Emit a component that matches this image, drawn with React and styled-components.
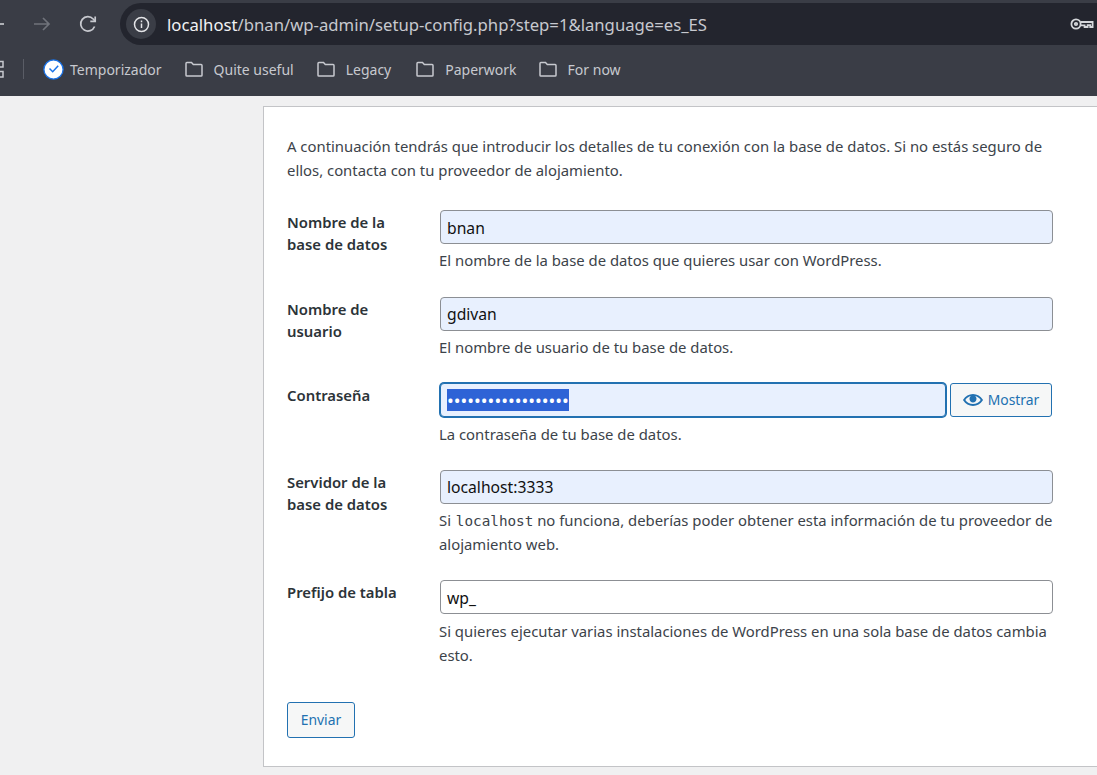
import React from "react";
import styled, { createGlobalStyle } from "styled-components";

const GlobalStyle = createGlobalStyle`
  html, body {
    margin: 0;
    height: 100%;
    overflow: hidden;
    background: #f0f0f1;
  }
`;

const Page = styled.div`
  width: 1097px;
  height: 775px;
  overflow: hidden;
  font-family: "Noto Sans", "Open Sans", sans-serif;
`;

// browser chrome
const Chrome = styled.div`
  height: 96px;
  background: #3a3d46;
  display: flex;
  flex-direction: column;
`;

const Toolbar = styled.div`
  height: 45px;
  padding-top: 3px;
  box-sizing: border-box;
  display: flex;
  align-items: center;
  margin-left: -16px;
`;

const NavIcon = styled.svg`
  width: 24px;
  height: 24px;
  margin-right: 22px;
  flex: none;
  fill: none;
  stroke: ${(p) => p.$color};
  stroke-width: 1.7;
`;

const AddressBar = styled.div`
  flex: 1;
  height: 42px;
  margin-left: -2px;
  margin-right: -30px;
  border-radius: 21px 0 0 21px;
  background: #23252e;
  display: flex;
  align-items: center;
  padding-left: 6px;
  padding-right: 33px;
`;

const InfoBadge = styled.div`
  width: 30px;
  height: 30px;
  border-radius: 50%;
  background: #3a3d46;
  display: flex;
  align-items: center;
  justify-content: center;
  margin-right: 11px;
`;

const Url = styled.div`
  flex: 1;
  color: #c7c9cf;
  font-size: 16.7px;
  white-space: nowrap;
  & b {
    font-weight: 400;
    color: #f1f2f4;
  }
`;

const Bookmarks = styled.div`
  flex: 1;
  display: flex;
  align-items: center;
  padding-bottom: 3px;
  color: #c7c9cf;
  font-size: 14px;
`;

const Divider = styled.div`
  width: 1px;
  height: 20px;
  background: #5a5d66;
  margin: 0 19px 0 19px;
`;

const Bookmark = styled.div`
  display: flex;
  align-items: center;
  gap: ${(p) => p.$gap || 10}px;
  margin-right: ${(p) => p.$after || 22}px;
  white-space: nowrap;
`;

const Clock = styled.svg`
  width: 21px;
  height: 21px;
`;

const FolderIcon = styled.svg`
  width: 20px;
  height: 18px;
  fill: none;
  stroke: #c7c9cf;
  stroke-width: 1.5;
`;

// wordpress card
const Content = styled.div`
  padding: 10px 0 0 263px;
`;

const Card = styled.div`
  width: 900px;
  height: 661px;
  box-sizing: border-box;
  background: #fff;
  border: 1px solid #c3c4c7;
  padding: 27px 23px;
  color: #3c434a;
  font-size: 14.86px;
  line-height: 24px;
`;

const FormColumn = styled.div`
  width: 766px;
`;

const Intro = styled.p`
  margin: 0 0 28px;
`;

const Row = styled.div`
  display: grid;
  grid-template-columns: 152px 1fr;
  margin-bottom: ${(p) => p.$gap}px;
`;

const Label = styled.div`
  font-weight: 600;
  color: #2c3338;
  line-height: 22px;
  padding-top: 1px;
  padding-right: 20px;
`;

const InputLine = styled.div`
  display: flex;
  gap: 4px;
  padding-left: 1px;
  margin-right: ${(p) => (p.$tight ? 1 : 0)}px;
`;

const TextInput = styled.div`
  flex: 1;
  height: 34px;
  box-sizing: border-box;
  padding: 1px 6px 0;
  display: flex;
  align-items: center;
  font-size: 15.7px;
  color: #111;
  background: ${(p) => (p.$plain ? "#fff" : "#e8f0fe")};
  border: 1px solid #8c8f94;
  border-radius: 4px;
`;

const FocusInput = styled(TextInput)`
  padding-top: 0;
  border-color: #2271b1;
  box-shadow: 0 0 0 1px #2271b1;
`;

const Selected = styled.span`
  display: inline-block;
  background: #2e63d6;
  color: #fff;
  font-size: 18px;
  line-height: 22px;
  height: 22px;
`;

const Help = styled.div`
  margin-top: 4.4px;
  & code {
    font-family: "DejaVu Sans Mono", "Liberation Mono", monospace;
    font-size: 14.3px;
    line-height: 1;
    margin-left: 1px;
  }
`;

const Button = styled.div`
  display: inline-flex;
  align-items: center;
  justify-content: center;
  gap: 5px;
  height: ${(p) => p.$h}px;
  width: ${(p) => p.$w}px;
  box-sizing: border-box;
  flex: none;
  background: #f6f7f7;
  color: #2271b1;
  border: 1px solid #2271b1;
  border-radius: 3px;
  font-size: 13.9px;
`;

const Folder = () => (
  <FolderIcon viewBox="0 0 20 18">
    <path d="M2 15.2V3.4c0-.5.4-.9.9-.9h4.6l1.8 2h7.800c.5 0 .9.4.9.9v9.800c0 .5-.4.9-.9.9H2.900c-.5 0-.9-.4-.9-.9z" />
  </FolderIcon>
);

const fields = [
  { label: "Nombre de la base de datos", value: "bnan", help: "El nombre de la base de datos que quieres usar con WordPress." },
  { label: "Nombre de usuario", value: "gdivan", help: "El nombre de usuario de tu base de datos." },
];

export default function App() {
  return (
    <Page>
      <GlobalStyle />
      <Chrome>
        <Toolbar>
          <NavIcon viewBox="0 0 24 24" $color="#d5d7db">
            <path d="M20 12H5M11 6l-6 6 6 6" />
          </NavIcon>
          <NavIcon viewBox="0 0 24 24" $color="#70737b">
            <path d="M4 12h15M13 6l6 6-6 6" />
          </NavIcon>
          <NavIcon viewBox="0 0 24 24" $color="#c7c9cf">
            <path d="M18.6 14.5A7.200 7.200 0 1 1 17.200 7L19 9" />
            <path d="M19.200 4.500V9.400H14.300" />
          </NavIcon>
          <AddressBar>
            <InfoBadge>
              <svg width="17" height="17" viewBox="0 0 17 17" fill="none" stroke="#e3e4e7" strokeWidth="1.5">
                <circle cx="8.5" cy="8.5" r="7" />
                <path d="M8.500 7.500v4.500M8.500 4.600v1.600" />
              </svg>
            </InfoBadge>
            <Url>
              <b>localhost</b>/bnan/wp-admin/setup-config.php?step=1&amp;language=es_ES
            </Url>
            <svg width="24" height="14" viewBox="0 0 24 14" fill="none" stroke="#d5d7db" strokeWidth="1.8">
              <circle cx="6" cy="7" r="4.6" />
              <circle cx="6" cy="7" r="1.2" />
              <path d="M10.600 5h12v5h-2.400V8.200h-2.600V10h-3V8.400h-4" />
            </svg>
          </AddressBar>
        </Toolbar>
        <Bookmarks>
          <svg width="4" height="18" viewBox="0 0 4 18" fill="none" stroke="#c7c9cf" strokeWidth="1.5">
            <path d="M0 1.500h3v5.500H0M0 11.500h3v5.500H0" />
          </svg>
          <Divider />
          <Bookmark $gap={6}>
            <Clock viewBox="0 0 21 21">
              <circle cx="10.5" cy="10.5" r="9.6" fill="#fff" stroke="#1a73e8" strokeWidth="1.3" />
              <path d="M6.500 9.500l3.200 3.200 5.500-6" fill="none" stroke="#1a73e8" strokeWidth="1.500" />
            </Clock>
            Temporizador
          </Bookmark>
          <Bookmark><Folder />Quite useful</Bookmark>
          <Bookmark $after={24}><Folder />Legacy</Bookmark>
          <Bookmark $after={21}><Folder />Paperwork</Bookmark>
          <Bookmark><Folder />For now</Bookmark>
        </Bookmarks>
      </Chrome>
      <Content>
        <Card>
          <FormColumn>
            <Intro>
              A continuación tendrás que introducir los detalles de tu conexión con la base de datos. Si no estás seguro de ellos, contacta con tu proveedor de alojamiento.
            </Intro>
            {fields.map((f) => (
              <Row key={f.value} $gap={24.2}>
                <Label>{f.label}</Label>
                <div>
                  <InputLine>
                    <TextInput>{f.value}</TextInput>
                  </InputLine>
                  <Help>{f.help}</Help>
                </div>
              </Row>
            ))}
            <Row $gap={24.2}>
              <Label>Contraseña</Label>
              <div>
                <InputLine $tight>
                  <FocusInput>
                    <Selected>••••••••••••••••••</Selected>
                  </FocusInput>
                  <Button $w={102} $h={34}>
                    <svg width="20" height="20" viewBox="0 0 20 20" fill="currentColor">
                      <path d="M19.7 9.400C17.700 6 14 3.900 10 3.900S2.300 6 .3 9.400L0 10l.3.6c2 3.400 5.700 5.500 9.700 5.500s7.700-2.100 9.700-5.500l.3-.6-.3-.6zM10 14.100c-3.100 0-6-1.600-7.700-4.100C3.600 8 5.700 6.600 8 6.100c-.9.6-1.500 1.700-1.500 2.900 0 1.900 1.600 3.500 3.500 3.500s3.500-1.600 3.500-3.500c0-1.200-.6-2.300-1.500-2.900 2.300.5 4.400 1.900 5.700 3.900-1.700 2.500-4.600 4.100-7.700 4.100z" />
                    </svg>
                    Mostrar
                  </Button>
                </InputLine>
                <Help>La contraseña de tu base de datos.</Help>
              </div>
            </Row>
            <Row $gap={24.2}>
              <Label>Servidor de la base de datos</Label>
              <div>
                <InputLine>
                  <TextInput>localhost:3333</TextInput>
                </InputLine>
                <Help>
                  Si <code>localhost</code> no funciona, deberías poder obtener esta información de tu proveedor de alojamiento web.
                </Help>
              </div>
            </Row>
            <Row $gap={35.6}>
              <Label>Prefijo de tabla</Label>
              <div>
                <InputLine>
                  <TextInput $plain>wp_</TextInput>
                </InputLine>
                <Help>Si quieres ejecutar varias instalaciones de WordPress en una sola base de datos cambia esto.</Help>
              </div>
            </Row>
            <Button $w={68} $h={36}>Enviar</Button>
          </FormColumn>
        </Card>
      </Content>
    </Page>
  );
}
